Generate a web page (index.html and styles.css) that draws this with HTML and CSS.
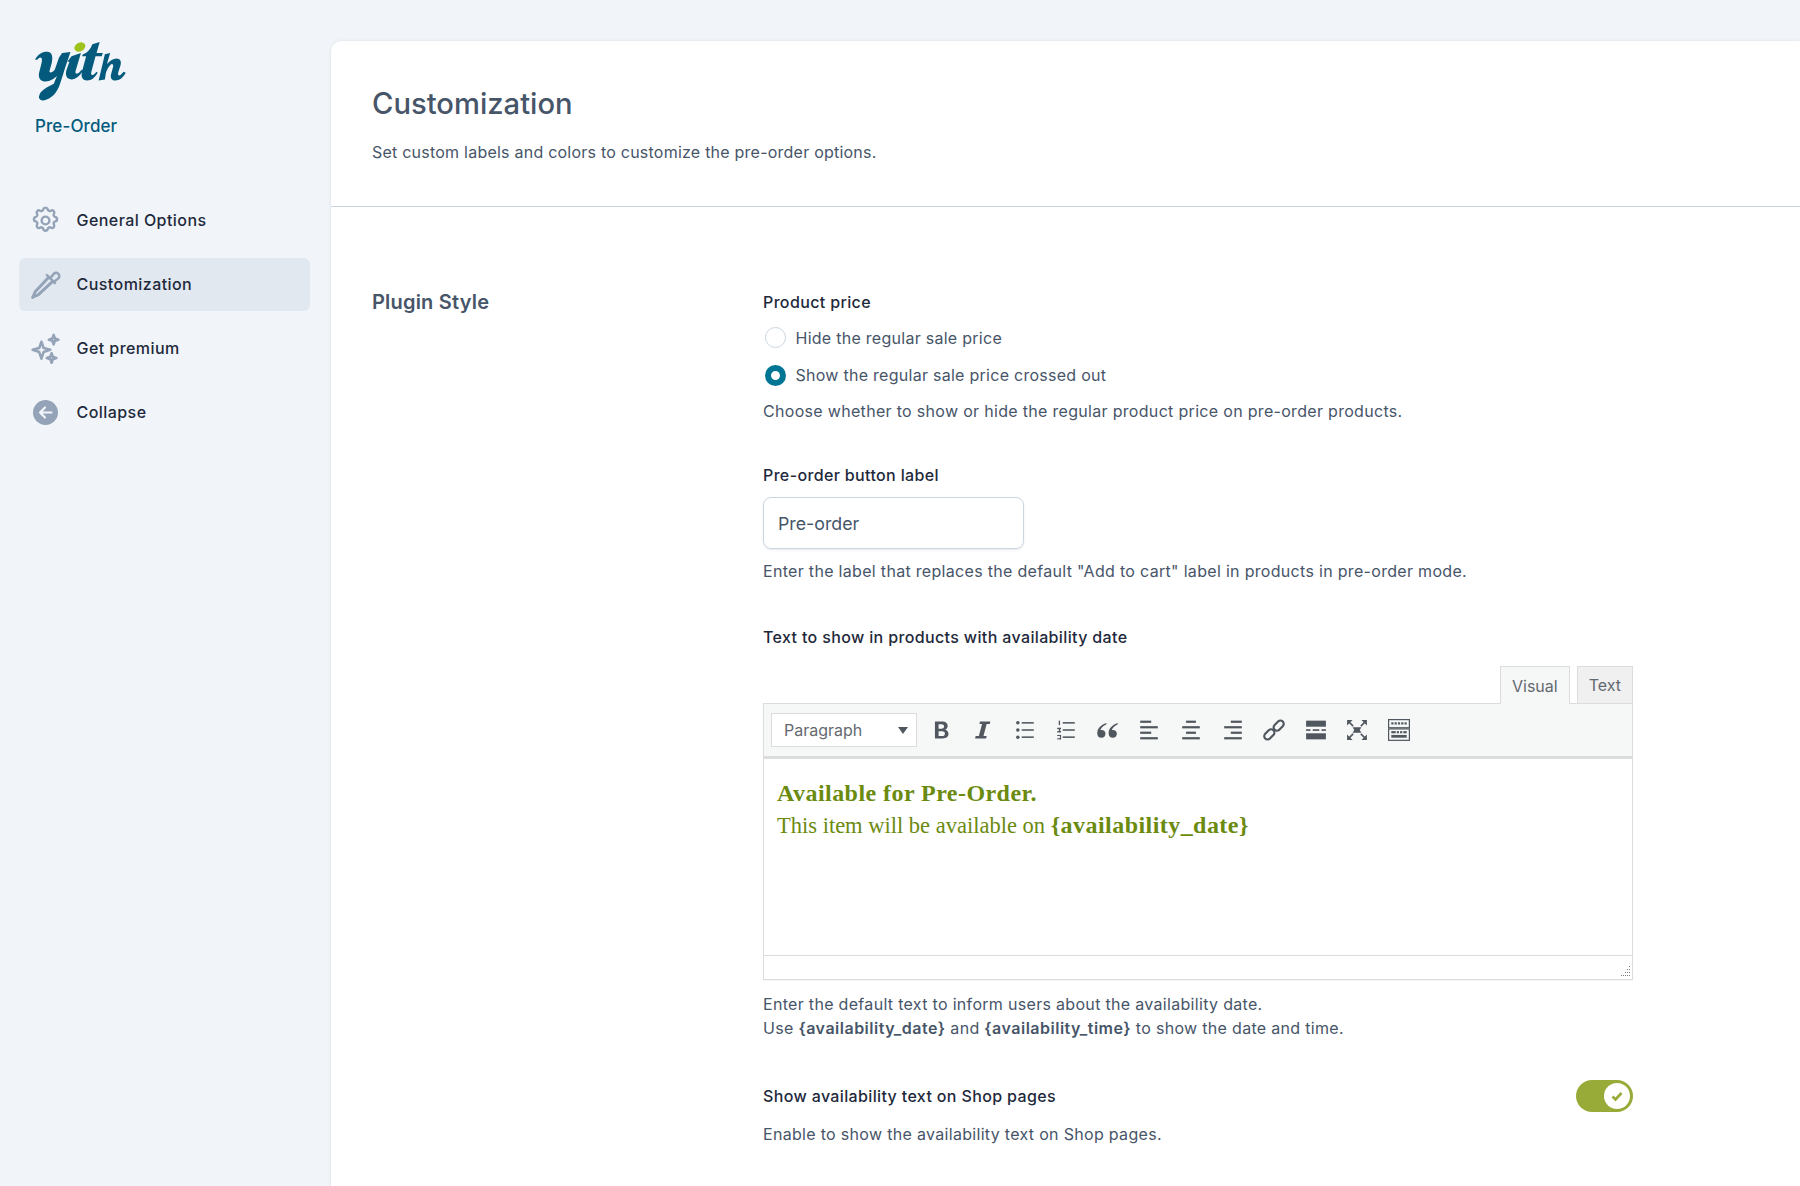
FILE: index.html
```html
<!DOCTYPE html>
<html lang="en">
<head>
<meta charset="utf-8">
<title>Customization</title>
<link rel="stylesheet" href="styles.css">
</head>
<body>
<div class="app">
  <aside class="side">
    <div class="brand">
      <div class="logo">
        <svg width="98" height="68" viewBox="0 0 94 62" preserveAspectRatio="none">
          <ellipse cx="44" cy="5.500" rx="5.500" ry="4" fill="#9fc31c" transform="rotate(-25 44 5.500)"/>
          <path fill="#045a7c" d="M1 17C4 11 10 9 14 10c4 1 4 6 3 10l-2 7c-1 3 3 2 5-1l4-11 3-4 8-1-5 14-2 6-3 9c-3 9-9 14-15 15-4 1-6-2-5-4 1-5 8-8 14-11l3-7c-4 4-12 7-16 3-3-3 0-9 1-14 1-3 1-6-1-6-1 0-2 1-3 2z"/>
          <path fill="#045a7c" d="M36 14l9-3-5 16c-1 3 1 4 4 1l2-2 1 1c-3 5-7 8-11 8-5 0-6-4-5-8l3-8-2 0z"/>
          <path fill="#045a7c" d="M56 3l7-2-3 10h6l-1 3h-6l-4 14c-1 3 1 4 3 2l2-2 1 1c-3 5-6 7-10 7-5 0-6-4-5-8l4-14h-4l1-2c4-1 7-4 9-9z"/>
          <path fill="#045a7c" d="M68 12l5-1-3 10c3-3 6-5 9-5 4 0 5 3 4 6l-2 6c-1 3 0 4 2 3l3-3 2 1c-3 5-6 7-10 7-4 0-5-3-4-6l2-7c0-2-1-3-3-1-2 2-3 4-4 7l-1 6-6 1z"/>
        </svg>
      </div>
      <div class="plugin-name">Pre-Order</div>
    </div>
    <nav class="menu">
      <a class="item">
        <svg class="ico" viewBox="0 0 24 24" fill="none" stroke="#94a3b8" stroke-width="1.900" stroke-linejoin="round"><path d="M10.300 3.300c.4-1.700 3-1.700 3.400 0a1.700 1.700 0 0 0 2.600 1.100c1.500-.9 3.200.8 2.300 2.300a1.700 1.700 0 0 0 1 2.600c1.800.4 1.800 3 0 3.400a1.700 1.700 0 0 0-1 2.600c.9 1.500-.8 3.200-2.300 2.300a1.700 1.700 0 0 0-2.600 1c-.4 1.800-3 1.800-3.400 0a1.700 1.700 0 0 0-2.600-1c-1.500.9-3.200-.8-2.300-2.300a1.700 1.700 0 0 0-1-2.600c-1.800-.4-1.800-3 0-3.400a1.700 1.700 0 0 0 1-2.600c-.9-1.500.8-3.200 2.300-2.300a1.700 1.700 0 0 0 2.600-1.100z"/><circle cx="12" cy="12" r="3"/></svg>
        <span>General Options</span>
      </a>
      <a class="item active">
        <svg class="ico" viewBox="0 0 24 24" fill="none" stroke="#94a3b8" stroke-width="1.800" stroke-linejoin="round" stroke-linecap="round"><g transform="translate(-.6 -.6) scale(1.050)"><path d="M14.500 6.500 4.600 17.200c-.5.600-.7 1.300-.9 2L2.500 21.500l2.300-1.200c.7-.2 1.400-.4 2-.9l10.700-9.900" stroke-width="2.200"/><path d="M13 5l6 6"/><path d="M15.500 7.500l2.600-3.400a2.400 2.400 0 0 1 3.400 3.400l-3.400 2.600"/></g></svg>
        <span>Customization</span>
      </a>
      <a class="item">
        <svg class="ico" viewBox="0 0 24 24" fill="none" stroke="#94a3b8" stroke-width="1.900" stroke-linejoin="round"><g transform="translate(-.6 -.6) scale(1.050)"><path d="M9 7l1.600 4.600L15.500 13l-4.900 1.600L9 19.500l-1.600-4.900L2.500 13l4.900-1.400z"/><path d="M18 2l.9 2.600 2.600.9-2.600.9-.9 2.600-.9-2.600-2.600-.9 2.600-.9z"/><path d="M16.500 15.500l.9 2.600 2.600.9-2.600.9-.9 2.600-.9-2.600-2.600-.9 2.600-.9z"/></g></svg>
        <span>Get premium</span>
      </a>
      <a class="item">
        <svg class="ico" viewBox="0 0 31 31"><circle cx="15.500" cy="15.500" r="12.500" fill="#94a3b8"/><path d="M21.500 15.500H10M15 10.500l-5 5 5 5" fill="none" stroke="#f1f5f9" stroke-width="2.200" stroke-linecap="round" stroke-linejoin="round"/></svg>
        <span>Collapse</span>
      </a>
    </nav>
  </aside>
  <main class="panel">
    <header class="head">
      <h1>Customization</h1>
      <p>Set custom labels and colors to customize the pre-order options.</p>
    </header>
    <section class="section">
      <h2>Plugin Style</h2>
      <div class="fields">
        <div class="field f-price">
          <div class="label">Product price</div>
          <label class="radio"><span class="dot"></span>Hide the regular sale price</label>
          <label class="radio"><span class="dot on"></span>Show the regular sale price crossed out</label>
          <p class="desc">Choose whether to show or hide the regular product price on pre-order products.</p>
        </div>
        <div class="field f-label">
          <div class="label">Pre-order button label</div>
          <div class="input">Pre-order</div>
          <p class="desc">Enter the label that replaces the default "Add to cart" label in products in pre-order mode.</p>
        </div>
        <div class="field f-text">
          <div class="label">Text to show in products with availability date</div>
          <div class="tabs"><span class="tab cur">Visual</span><span class="tab">Text</span></div>
          <div class="editor">
            <div class="toolbar">
              <div class="select">Paragraph<i class="caret"></i></div>
              <div class="btns">
                <svg class="tb" viewBox="0 0 20 20"><path transform="translate(-1 -1) scale(1.100)" fill="#50575e" fill-rule="evenodd" d="M5 3h6.200c2.600 0 4.300 1.300 4.300 3.600 0 1.500-.8 2.600-2.100 3.100 1.700.4 2.800 1.700 2.800 3.500 0 2.500-1.900 3.800-4.700 3.800H5zm3 2.300v3.600h2.500c1.300 0 2-.7 2-1.800s-.7-1.800-2-1.800zm0 5.800v3.900h3c1.400 0 2.200-.7 2.200-2s-.8-1.900-2.200-1.900z"/></svg>
                <svg class="tb" viewBox="0 0 20 20"><path transform="translate(-1 -1) scale(1.100)" fill="#50575e" d="M7.500 3H16l-.4 2h-2.600l-2.600 10h2.600l-.4 2H3.500l.4-2h2.700L9.200 5H7.100z"/></svg>
                <svg class="tb" viewBox="0 0 20 20"><g fill="#50575e"><circle cx="3.500" cy="3.500" r="1.600"/><circle cx="3.500" cy="10" r="1.600"/><circle cx="3.500" cy="16.500" r="1.600"/><rect x="7" y="2.800" width="11" height="1.400"/><rect x="7" y="9.300" width="11" height="1.400"/><rect x="7" y="15.800" width="11" height="1.400"/></g></svg>
                <svg class="tb" viewBox="0 0 20 20"><g fill="#50575e"><rect x="7" y="2.800" width="11" height="1.400"/><rect x="7" y="9.300" width="11" height="1.400"/><rect x="7" y="15.800" width="11" height="1.400"/><rect x="3.400" y="1.500" width="1.200" height="4"/><rect x="2" y="8" width="3.500" height="1.200"/><rect x="2" y="11" width="3.500" height="1.200"/><rect x="3.500" y="8" width="1.200" height="4"/><rect x="2" y="14.500" width="3.500" height="1"/><rect x="2" y="17.500" width="3.500" height="1"/><rect x="4.500" y="14.500" width="1" height="4"/></g></svg>
                <svg class="tb" viewBox="0 0 20 20"><path transform="translate(-1.500 -1.500) scale(1.150)" fill="#50575e" d="M9 4.500C5.500 5.500 1.500 8 1.500 12.500c0 2.300 1.400 3.700 3.300 3.700s3.200-1.400 3.200-3.200-1.300-3-3-3c-.4 0-.7 0-1 .2.300-1.700 2-3.400 4.300-4.400zm9 0c-3.500 1-7.500 3.500-7.500 8 0 2.300 1.400 3.700 3.300 3.700s3.200-1.400 3.200-3.200-1.300-3-3-3c-.4 0-.7 0-1 .2.300-1.700 2-3.400 4.300-4.400z"/></svg>
                <svg class="tb" viewBox="0 0 20 20"><g fill="#50575e"><rect x="2" y="1.500" width="10" height="2"/><rect x="2" y="6.500" width="16" height="2"/><rect x="2" y="11.500" width="10" height="2"/><rect x="2" y="16.500" width="16" height="2"/></g></svg>
                <svg class="tb" viewBox="0 0 20 20"><g fill="#50575e"><rect x="5.500" y="1.500" width="9" height="2"/><rect x="2" y="6.500" width="16" height="2"/><rect x="5.500" y="11.500" width="9" height="2"/><rect x="2" y="16.500" width="16" height="2"/></g></svg>
                <svg class="tb" viewBox="0 0 20 20"><g fill="#50575e"><rect x="8" y="1.500" width="10" height="2"/><rect x="2" y="6.500" width="16" height="2"/><rect x="8" y="11.500" width="10" height="2"/><rect x="2" y="16.500" width="16" height="2"/></g></svg>
                <svg class="tb" viewBox="0 0 20 20"><g fill="none" stroke="#50575e" stroke-width="2"><rect x="0.500" y="11" width="10.500" height="6" rx="3" transform="rotate(-45 5.750 14)"/><rect x="9" y="3" width="10.500" height="6" rx="3" transform="rotate(-45 14.250 6)"/></g></svg>
                <svg class="tb" viewBox="0 0 20 20"><g fill="#50575e"><rect x="1" y="1.500" width="18" height="5.500"/><rect x="1" y="13" width="18" height="5.500"/><rect x="1" y="9.300" width="4" height="1.500"/><rect x="7" y="9.300" width="6" height="1.500"/><rect x="15" y="9.300" width="4" height="1.500"/></g></svg>
                <svg class="tb" viewBox="0 0 20 20"><path fill="#50575e" d="M6 7.500h8l-1.500 2.500 1.500 2.500H6l1.500-2.500z"/><path fill="none" stroke="#50575e" stroke-width="1.500" d="M2.500 2.500l4 4M17.500 2.500l-4 4M2.500 17.500l4-4M17.500 17.500l-4-4"/><path fill="#50575e" d="M1 1h5L1 6zM19 1v5l-5-5zM1 19v-5l5 5zM19 19h-5l5-5z"/></svg>
                <svg class="tb" viewBox="0 0 20 20"><g fill="none" stroke="#50575e" stroke-width="1.100"><rect x="0.550" y="0.550" width="18.900" height="7.400"/><rect x="0.550" y="9" width="18.900" height="10.400"/></g><g fill="#50575e"><rect x="3" y="3" width="2" height="2"/><rect x="6" y="3" width="2" height="2"/><rect x="9" y="3" width="2" height="2"/><rect x="12" y="3" width="2" height="2"/><rect x="15" y="3" width="2" height="2"/><rect x="3" y="11" width="4" height="2"/><rect x="8" y="11" width="2" height="2"/><rect x="11" y="11" width="2" height="2"/><rect x="14" y="11" width="3" height="2"/><rect x="3" y="14.500" width="14" height="2.500"/></g></svg>
              </div>
            </div>
            <div class="content">
              <p><strong>Available for Pre-Order.</strong><br>This item will be available on <strong>{availability_date}</strong></p>
            </div>
            <div class="status">
              <svg class="grip" width="12" height="12" viewBox="0 0 12 12"><g fill="#7a7a7a"><rect x="10" y="0" width="1" height="1"/><rect x="10" y="3" width="1" height="1"/><rect x="8" y="3" width="1" height="1"/><rect x="10" y="6" width="1" height="1"/><rect x="8" y="6" width="1" height="1"/><rect x="6" y="6" width="1" height="1"/><rect x="10" y="9" width="1" height="1"/><rect x="8" y="9" width="1" height="1"/><rect x="6" y="9" width="1" height="1"/><rect x="4" y="9" width="1" height="1"/><rect x="2" y="9" width="1" height="1"/></g></svg>
            </div>
          </div>
          <p class="desc d-two">Enter the default text to inform users about the availability date.<br>Use <b>{availability_date}</b> and <b>{availability_time}</b> to show the date and time.</p>
        </div>
        <div class="field f-toggle">
          <div class="toggle-row">
            <div class="label">Show availability text on Shop pages</div>
            <div class="toggle"><span class="knob"><svg width="14" height="14" viewBox="0 0 14 14"><path d="M2.500 7.500l3 3 6-6.500" fill="none" stroke="#98ab38" stroke-width="2.600"/></svg></span></div>
          </div>
          <p class="desc">Enable to show the availability text on Shop pages.</p>
        </div>
      </div>
    </section>
  </main>
</div>
</body>
</html>
```
FILE: styles.css
```css
* { box-sizing: border-box; }
html, body { margin: 0; height: 100%; }
body {
  background: #f1f5f9;
  font-family: Inter, "Liberation Sans", sans-serif;
  color: #475569;
  font-size: 16px;
  overflow: hidden;
}
.app { display: flex; height: 1186px; padding-top: 41px; }
.side { width: 331px; flex: none; margin-top: -41px; padding-left: 19px; }
.brand { padding: 41px 0 0 16px; height: 193.500px; }
.logo { height: 72px; margin-left: -1px; }
.plugin-name { margin-top: 2.500px; font-size: 17px; font-weight: 500; line-height: 20px; letter-spacing: .1px; color: #045a7c; }
.menu { width: 291px; display: flex; flex-direction: column; gap: 11px; }
.item {
  display: flex; align-items: center; height: 53px; border-radius: 6px;
  color: #1e293b; font-size: 16px; font-weight: 500; letter-spacing: .44px; padding-left: 10.500px;
}
.item.active { background: #e2e8f0; }
.ico { width: 31px; height: 31px; margin-right: 16px; flex: none; }
.panel {
  flex: 1; background: #fff; border-top-left-radius: 10px;
  box-shadow: 0 0 3px rgba(100,116,139,.18);
}
.head { height: 166px; border-bottom: 1px solid #cbd5e1; padding: 44px 41px 0; }
h1 { margin: 0; font-size: 29.200px; line-height: 38px; font-weight: 500; color: #475569; }
.head p { margin: 19px 0 0; font-size: 16px; line-height: 20px; letter-spacing: .23px; }
.section { display: flex; padding: 83px 41px 0; }
h2 { margin: 0; width: 391px; flex: none; font-size: 20px; line-height: 24px; font-weight: 600; letter-spacing: .2px; color: #475569; }
.fields { width: 870px; padding-top: 2px; }
.label { color: #1e293b; font-size: 16px; font-weight: 500; letter-spacing: .36px; line-height: 20px; }
.desc { margin: 0; font-size: 16px; line-height: 24px; letter-spacing: .31px; color: #475569; }
.radio { display: flex; align-items: center; height: 37.500px; line-height: 20px; letter-spacing: .27px; color: #475569; }
.f-price .label { margin-bottom: 7px; }
.f-price .radio + .radio { margin-bottom: 7px; }
.f-price .desc { line-height: 20px; }
.dot { width: 21px; height: 21px; border-radius: 50%; border: 1px solid #cbd5e1; margin: 0 9.500px 0 2px; background: #fff; flex: none; }
.dot.on { border: 6px solid #007694; }
.f-label { margin-top: 44px; }
.input {
  margin-top: 12px; width: 261px; height: 52px; border: 1px solid #cbd5e1; border-radius: 8px;
  padding: 0 14px; display: flex; align-items: center; font-size: 17.800px; color: #475569;
  box-shadow: 0 1px 2px rgba(100,116,139,.15);
}
.f-label .desc { margin-top: 12px; line-height: 20px; }
.f-text { margin-top: 46px; }
.tabs { display: flex; justify-content: flex-end; align-items: flex-start; gap: 7px; margin-top: 19px; height: 38px; position: relative; z-index: 1; margin-bottom: -1px; }
.tab {
  height: 37px; border: 1px solid #dcdcde; border-bottom: 0; background: #f0f0f1; color: #646970;
  font-size: 16px; padding: 0 11px; display: flex; align-items: center;
}
.tab.cur { background: #f6f7f7; height: 38px; }
.editor { border: 1px solid #dcdcde; background: #fff; box-shadow: 0 1px 1px rgba(0,0,0,.04); }
.toolbar { height: 55px; background: #f6f7f7; border-bottom: 3px solid #dcdcde; display: flex; align-items: center; padding-left: 7px; }
.select {
  width: 146px; height: 34px; border: 1px solid #dcdcde; background: #fff; color: #646970; font-size: 16px;
  display: flex; align-items: center; justify-content: space-between; padding: 0 8px 0 12px; flex: none;
}
.caret { width: 0; height: 0; border-left: 5px solid transparent; border-right: 5px solid transparent; border-top: 7px solid #50575e; }
.btns { display: flex; align-items: center; gap: 19.600px; margin-left: 13.400px; }
.tb { width: 22px; height: 22px; flex: none; }
.content { height: 196px; padding: 19px 13px; font-family: "Liberation Serif", Georgia, serif; font-size: 22.500px; line-height: 32px; color: #6b8a10; }
.content p { margin: 0; }
.content strong { font-size: 24px; line-height: 30px; letter-spacing: .45px; }
.status { height: 24px; border-top: 1px solid #dcdcde; position: relative; }
.grip { position: absolute; right: 1px; bottom: 1px; }
.d-two { margin-top: 12px; }
.d-two b { font-weight: 600; letter-spacing: .5px; }
.f-toggle { margin-top: 40px; }
.toggle-row { display: flex; justify-content: space-between; align-items: center; }
.toggle { width: 57px; height: 32px; border-radius: 16px; background: #98ab38; position: relative; }
.knob { position: absolute; right: 3px; top: 3px; width: 26px; height: 26px; border-radius: 50%; background: #fff; display: flex; align-items: center; justify-content: center; }
.f-toggle .desc { margin-top: 12px; line-height: 20px; }
```
